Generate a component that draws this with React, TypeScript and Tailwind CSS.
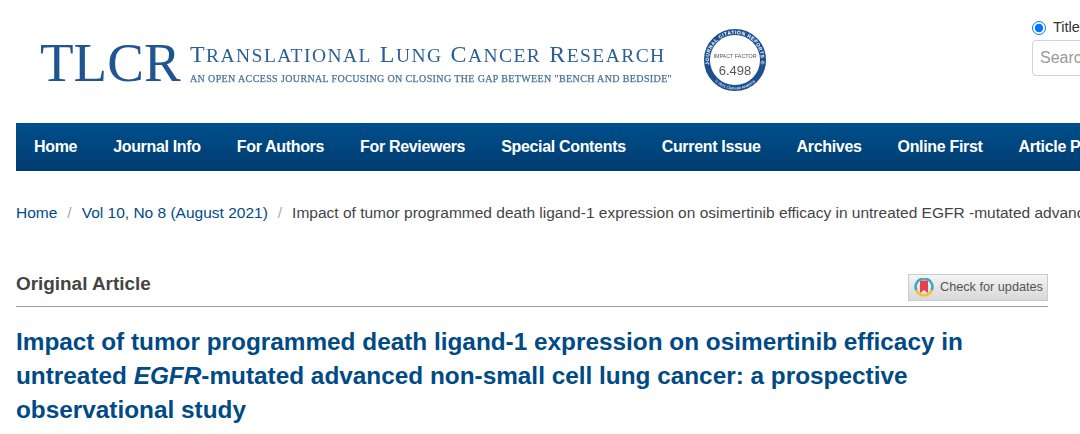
function Caps({ text }: { text: string }) {
  return (
    <>
      {text.split(" ").map((w, i) => (
        <span key={i} className={i > 0 ? "ml-[8px]" : ""}>
          <span className="text-[24px]">{w[0]}</span>
          <span className="text-[19.5px]">{w.slice(1).toUpperCase()}</span>
        </span>
      ))}
    </>
  );
}

export default function App() {
  const nav = ["Home", "Journal Info", "For Authors", "For Reviewers", "Special Contents", "Current Issue", "Archives", "Online First", "Article Proc"];
  return (
    <div className="w-[1080px] h-[434px] overflow-hidden bg-white font-['Liberation_Sans',Arial,sans-serif]">
      <header className="h-[123px] flex items-start pl-10 whitespace-nowrap">
        <div className="mt-[32px] text-[55px] leading-[62px] text-[#1f5590] font-['Liberation_Serif',serif] w-[150px] shrink-0 blur-[0.4px]">TLCR</div>
        <div className="mt-[40px] w-[513px] shrink-0 font-['Liberation_Serif',serif] text-[#2a5f96] blur-[0.3px]">
          <div className="leading-[28px] tracking-[1.44px]"><Caps text="Translational Lung Cancer Research" /></div>
          <div className="text-[10px] leading-[13px] mt-[1px] uppercase text-[#4a739c] tracking-[0.375px] [-webkit-text-stroke:0.25px_#4a739c]">An Open Access Journal Focusing on Closing the Gap between "Bench and Bedside"</div>
        </div>
        <svg className="mt-[29px] shrink-0 blur-[0.3px]" width="64" height="62" viewBox="0 0 64 62">
          <circle cx="32" cy="31" r="28" fill="white" stroke="#1d4f91" strokeWidth="6" />
          <defs>
            <path id="arcTop" d="M32 57 A26 26 0 1 1 32.01 57" />
            <path id="arcBot" d="M32 1.5 A29.5 29.5 0 1 0 32.01 1.5" />
          </defs>
          <text fontSize="5" fontWeight="700" fill="white" letterSpacing="0.45"><textPath href="#arcTop" startOffset="50%" textAnchor="middle">JOURNAL CITATION REPORTS ®</textPath></text>
          <text fontSize="3.8" fill="white"><textPath href="#arcBot" startOffset="50%" textAnchor="middle">© 2021 Clarivate Analytics</textPath></text>
          <text x="32" y="28.5" fontSize="5.4" fill="#555" textAnchor="middle">IMPACT FACTOR</text>
          <text x="32" y="46" fontSize="13" fill="#555" textAnchor="middle">6.498</text>
        </svg>
        <div className="ml-[265px] mt-[19px] shrink-0 w-[200px]">
          <label className="flex items-center h-[18px] text-[14.5px] text-[#333]">
            <input type="radio" defaultChecked className="w-[14px] h-[14px] m-0 mr-[7px] accent-[#0075ff]" />
            Title
          </label>
          <div className="mt-[3px] h-[36px] border border-[#ced4da] rounded-[4px] flex items-center pl-[7px] text-[16px] text-[#9a9a9a]">Search</div>
        </div>
      </header>
      <nav className="ml-4 h-12 bg-gradient-to-b from-[#004f8c] to-[#003c70] flex items-center pl-[18px] gap-9 whitespace-nowrap text-[16px] font-bold text-white">
        {nav.map((n) => <span key={n} className="tracking-[-0.33px] shrink-0">{n}</span>)}
      </nav>
      <div className="ml-4 mt-[32px] h-[20px] flex items-center whitespace-nowrap text-[15.5px] text-[#5a5a5a]">
        <span className="text-[#004b87]">Home</span>
        <span className="mx-[10px] text-[#aaa]">/</span>
        <span className="text-[#004b87]">Vol 10, No 8 (August 2021)</span>
        <span className="mx-[10px] text-[#aaa]">/</span>
        <span className="text-[#444]">Impact of tumor programmed death ligand-1 expression on osimertinib efficacy in untreated EGFR -mutated advanced non-small cell lung cancer</span>
      </div>
      <div className="ml-4 w-[1032px] mt-[48px] h-[36px] border-b border-[#999] flex items-start justify-between">
        <span className="text-[18.9px] leading-[26px] font-bold text-[#444]">Original Article</span>
        <div className="mt-[3px] w-[140px] h-[27px] border border-[#ccc] bg-gradient-to-b from-[#f4f4f4] to-[#d8d8d8] flex items-center pl-[5px] text-[12.7px] text-[#555]">
          <svg className="mr-[6px] shrink-0" width="20" height="20" viewBox="0 0 20 20">
            <path d="M2.4 12.5 A8.4 8.4 0 1 1 17.6 12.5" fill="none" stroke="#3ea7c4" strokeWidth="2.6" />
            <path d="M2.2 12 A8.4 8.4 0 0 0 17.8 12" fill="none" stroke="#f2c430" strokeWidth="2.6" />
            <path d="M6 2.5 H14 V15 L10 12 L6 15 Z" fill="#e5404f" />
          </svg>
          Check for updates
        </div>
      </div>
      <h1 className="ml-4 mt-[18px] w-[1000px] text-[24.35px] leading-[34px] font-bold text-[#004a85]">
        Impact of tumor programmed death ligand-1 expression on osimertinib efficacy in untreated <em>EGFR</em>-mutated advanced non-small cell lung cancer: a prospective observational study
      </h1>
    </div>
  );
}
